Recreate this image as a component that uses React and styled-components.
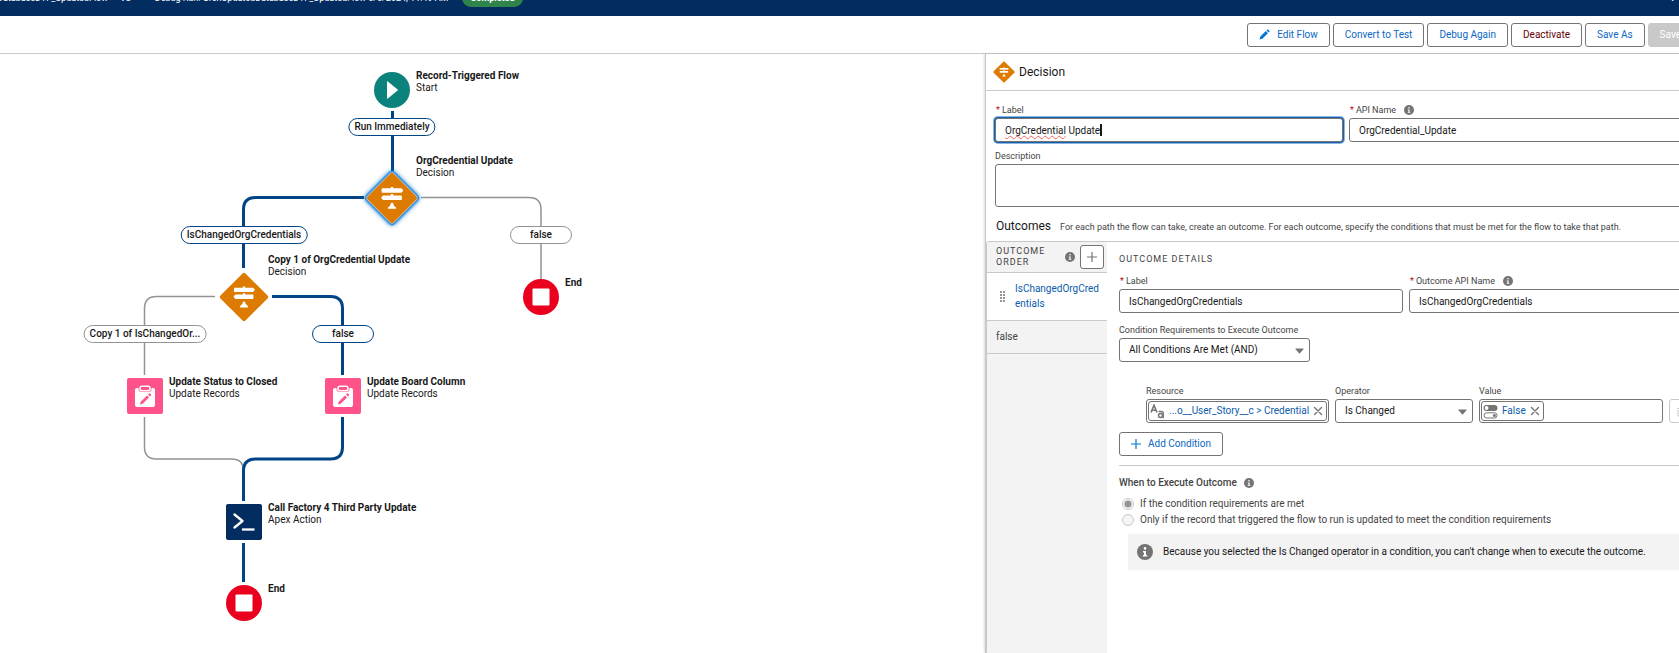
import React from "react";
import styled, { createGlobalStyle, css } from "styled-components";

const GlobalStyle = createGlobalStyle`
  *, *::before, *::after { box-sizing: border-box; }
  html, body { margin: 0; height: 100%; background: #fff; overflow: hidden; }
  #root { height: 100%; }
  body, button, input, textarea, select {
    font-family: Roboto, "Open Sans", sans-serif;
    font-size: 10px;
    line-height: 12px;
    color: #181818;
  }
  button { cursor: pointer; }
`;

const Builder = styled.div`
  display: flex;
  flex-direction: column;
  width: calc(100% + 28px);
  min-height: 100vh;
`;

/* ---------- header and toolbar ---------- */

const Header = styled.header`
  display: flex;
  align-items: center;
  height: 36px;
  margin-top: -20px;
  padding-right: 32px;
  background: #032d60;
  color: #fff;
  font-size: 9px;
  white-space: nowrap;
`;

const FlowName = styled.span`
  display: flex;
  justify-content: flex-end;
  width: 108px;
`;

const Version = styled.span`
  margin-left: 12px;
`;

const RunName = styled.span`
  margin-left: 24px;
`;

const Badge = styled.span`
  margin-left: 14px;
  padding: 3px 8px;
  border-radius: 12px;
  background: #2e844a;
  font-weight: 700;
`;

const HeaderHelp = styled.span`
  margin-left: auto;
  font-weight: 700;
`;

const Toolbar = styled.div`
  display: flex;
  align-items: center;
  justify-content: flex-end;
  gap: 3px;
  height: 38px;
  padding: 0 14px;
  border-bottom: 1px solid #c9c9c9;
`;

const Button = styled.button`
  display: inline-flex;
  align-items: center;
  justify-content: center;
  gap: 7px;
  height: 24px;
  padding: 0 11px;
  border: 1px solid #747474;
  border-radius: 3px;
  background: #fff;
  color: ${(p) => (p.$tone === "danger" ? "#640103" : "#0b67c2")};
  white-space: nowrap;
  ${(p) =>
    p.disabled &&
    css`
      border-color: #c9c9c9;
      background: #c9c9c9;
      color: #fff;
    `}
`;

/* ---------- canvas ---------- */

const Workspace = styled.main`
  display: flex;
  flex: 1;
`;

const Canvas = styled.section`
  position: relative;
  flex: 1;
  min-width: 580px;
  min-height: 599px;
`;

const Connectors = styled.svg`
  position: absolute;
  left: 0;
  top: 0;
`;

const Node = styled.div`
  position: absolute;
  left: ${(p) => p.$x}px;
  top: ${(p) => p.$y}px;
  width: 36px;
  height: 36px;
`;

const NodeIcon = styled.svg`
  display: block;
  width: 36px;
  height: 36px;
  overflow: visible;
`;

const NodeText = styled.div`
  position: absolute;
  left: 42px;
  top: ${(p) => (p.$type === "decision" ? -25 : -2)}px;
  white-space: nowrap;
`;

const NodeTitle = styled.div`
  font-weight: 700;
`;

const PathLabel = styled.div`
  position: absolute;
  left: ${(p) => p.$x}px;
  top: ${(p) => p.$y}px;
  transform: translateX(-50%);
  min-width: 62px;
  height: 18px;
  padding: 2px 5px;
  border: 1px solid ${(p) => (p.$active ? "#014486" : "#939393")};
  border-radius: 9px;
  background: #fff;
  font-weight: 500;
  text-align: center;
  white-space: nowrap;
`;

/* ---------- property panel ---------- */

const Panel = styled.aside`
  display: flex;
  flex-direction: column;
  flex: 0 0 722px;
  min-width: 0;
  border-left: 1px solid #c9c9c9;
  box-shadow: -1px 0 2px rgba(0, 0, 0, 0.14);
  background: #fff;
`;

const PanelHeader = styled.header`
  display: flex;
  align-items: center;
  gap: 4px;
  height: 37px;
  padding: 0 7px;
  border-bottom: 1px solid #c9c9c9;
`;

const PanelTitle = styled.h1`
  margin: 0;
  font-size: 12px;
  font-weight: 400;
`;

const PanelForm = styled.div`
  display: flex;
  flex-direction: column;
  gap: 7px;
  padding: 12px 10px 0 9px;
`;

const FieldRow = styled.div`
  display: flex;
  align-items: flex-end;
  gap: 6px;
`;

const Field = styled.div`
  display: flex;
  flex-direction: column;
  flex: ${(p) => (p.$width ? `0 0 ${p.$width}px` : "1 1 0")};
  min-width: 0;
`;

const LabelLine = styled.div`
  display: flex;
  align-items: center;
  gap: 8px;
  height: 13px;
  margin-bottom: 2px;
  color: #444;
  font-size: 9px;
  white-space: nowrap;
`;

const Required = styled.abbr`
  margin-right: 2px;
  padding-left: 1px;
  color: #ba0517;
  text-decoration: none;
`;

const control = css`
  width: 100%;
  height: 24px;
  padding: 0 9px;
  border: 1px solid #747474;
  border-radius: 3px;
  background: #fff;
  outline: none;
`;

const InputWrap = styled.div`
  position: relative;
  display: flex;
`;

const TextInput = styled.input`
  ${control}
  ${(p) =>
    p.$focused &&
    css`
      box-shadow: 0 0 0 1px #1b5faa, 0 0 0 2px #8bb7e4;
    `}
`;

const SpellMark = styled.span`
  position: absolute;
  left: 10px;
  top: 6px;
  color: transparent;
  pointer-events: none;
  white-space: pre;
  border-right: 2px solid #181818;
`;

const Misspelt = styled.span`
  text-decoration: underline wavy #f0605a 1px;
  text-underline-offset: 2px;
  text-decoration-skip-ink: none;
`;

const TextArea = styled.textarea`
  ${control}
  height: 43px;
  resize: none;
`;

const Select = styled.select`
  ${control}
  appearance: none;
`;

const SelectArrow = styled.svg`
  position: absolute;
  right: 6px;
  top: 10px;
  pointer-events: none;
`;

const OutcomesHeading = styled.div`
  display: flex;
  align-items: baseline;
  gap: 9px;
  padding: 11px 10px 7px;
  color: #444;
  font-size: 9px;
  white-space: nowrap;
`;

const OutcomesTitle = styled.h2`
  margin: 0;
  font-size: 12px;
  line-height: 16px;
  font-weight: 400;
  color: #181818;
`;

const Outcomes = styled.div`
  display: flex;
  flex: 1;
  border-top: 1px solid #c9c9c9;
  border-left: 1px solid #c9c9c9;
  border-top-left-radius: 3px;
`;

const OutcomeList = styled.nav`
  flex: 0 0 120px;
  background: #f3f3f3;
`;

const OutcomeListHeader = styled.div`
  display: flex;
  align-items: center;
  height: 31px;
  padding: 0 3px 0 9px;
  border-bottom: 1px solid #c9c9c9;
`;

const SectionTitle = styled.h3`
  flex: 1;
  margin: 0;
  font-size: 9px;
  line-height: 11px;
  font-weight: 400;
  letter-spacing: 1px;
  text-transform: uppercase;
  color: #444;
`;

const IconButton = styled.button`
  display: flex;
  align-items: center;
  justify-content: center;
  flex: none;
  width: 24px;
  height: 24px;
  margin-left: ${(p) => (p.disabled ? 0 : 5)}px;
  padding: 0;
  border: 1px solid ${(p) => (p.disabled ? "#c9c9c9" : "#747474")};
  border-radius: 3px;
  background: #fff;
`;

const OutcomeItem = styled.a`
  display: flex;
  align-items: center;
  gap: 8px;
  min-height: 33px;
  padding: 8px 6px 9px 9px;
  border-bottom: 1px solid #c9c9c9;
  background: ${(p) => (p.$selected ? "#fff" : "#f3f3f3")};
  color: ${(p) => (p.$selected ? "#0b5cab" : "#444")};
  line-height: 15px;
  text-decoration: none;
  overflow-wrap: anywhere;
`;

const OutcomeDetails = styled.div`
  flex: 1;
  min-width: 0;
  padding: 12px 14px 0 12px;
`;

const DetailFields = styled.div`
  display: flex;
  flex-direction: column;
  gap: 10px;
  margin-top: 9px;
`;

const ConditionRow = styled.div`
  display: flex;
  align-items: flex-end;
  gap: 6px;
  margin: 22px -14px 9px 27px;
`;

const PillBox = styled.div`
  display: flex;
  align-items: center;
  height: 24px;
  padding: 0 1px;
  border: 1px solid #747474;
  border-radius: 3px;
`;

const Pill = styled.span`
  display: flex;
  align-items: center;
  gap: 4px;
  flex: ${(p) => (p.$fill ? "1" : "0 0 auto")};
  min-width: 0;
  height: 20px;
  padding: 0 3px 0 1px;
  border: 1px solid #747474;
  border-radius: 3px;
  white-space: nowrap;
`;

const PillText = styled.a`
  flex: 1;
  color: #0b5cab;
  text-align: right;
  text-decoration: none;
`;

const PillRemove = styled.button`
  display: flex;
  padding: 0;
  border: 0;
  background: none;
`;

const ExecuteSection = styled.fieldset`
  margin: 9px 0 0;
  padding: 10px 0 0;
  border: 0;
  border-top: 1px solid #c9c9c9;
`;

const ExecuteTitle = styled.div`
  display: flex;
  align-items: center;
  gap: 7px;
  height: 14px;
  margin-bottom: 6px;
  font-weight: 500;
  color: #444;
`;

const RadioLabel = styled.label`
  display: flex;
  align-items: center;
  gap: 6px;
  height: 16px;
  padding-left: 3px;
  color: #444;
`;

const Radio = styled.input`
  appearance: none;
  width: 12px;
  height: 12px;
  margin: 0;
  border: 1px solid #c9c9c9;
  border-radius: 50%;
  background: #f3f3f3;
  &:checked {
    background: radial-gradient(circle, #939393 0 3px, #f3f3f3 4px);
  }
`;

const Notice = styled.div`
  display: flex;
  align-items: center;
  gap: 10px;
  height: 36px;
  margin: 6px -14px 0 9px;
  padding: 0 9px;
  background: #f3f3f3;
`;

/* ---------- icons ---------- */

const Icon = styled.svg`
  flex: none;
`;

const InfoIcon = ({ size = 10 }) => (
  <Icon width={size} height={size} viewBox="0 0 16 16" aria-hidden="true">
    <circle cx="8" cy="8" r="8" fill="#747474" />
    <circle cx="8" cy="4.4" r="1.3" fill="#fff" />
    <path d="M6 7h3v4h1.2v1.4H5.9V11H7V8.4H6z" fill="#fff" />
  </Icon>
);

const PlusIcon = ({ color = "#747474", size = 10 }) => (
  <Icon width={size} height={size} viewBox="0 0 10 10" aria-hidden="true">
    <path d="M5 .5v9M.5 5h9" stroke={color} strokeWidth="1.2" fill="none" strokeLinecap="round" />
  </Icon>
);

const CloseIcon = () => (
  <Icon width="10" height="10" viewBox="0 0 10 10" aria-hidden="true">
    <path d="M1.5 1.5l7 7M8.500 1.5l-7 7" stroke="#747474" strokeWidth="1.4" strokeLinecap="round" />
  </Icon>
);

const PencilIcon = () => (
  <Icon width="11" height="11" viewBox="0 0 11 11" aria-hidden="true">
    <path d="M.6 10.400l.6-2.700 5.600-5.600 2.100 2.100-5.600 5.600zM7.500 1.400l.8-.8q.4-.3.8 0l1.300 1.300q.3.4 0 .8l-.8.8z" fill="#0176d3" />
  </Icon>
);

const TextTypeIcon = () => (
  <Icon width="15" height="15" viewBox="0 0 15 15" fill="none" stroke="#747474" aria-hidden="true">
    <path d="M1 8.500 4 1.200l3 7.300M2 6.200h4" strokeWidth="1.600" />
    <circle cx="10.500" cy="11.500" r="2" strokeWidth="1.500" />
    <path d="M8.500 7.500h2.700q2 0 2 1.800v5" strokeWidth="1.500" />
  </Icon>
);

const BooleanIcon = () => (
  <Icon width="15" height="15" viewBox="0 0 15 15" aria-hidden="true">
    <rect x=".5" y="1" width="14" height="6" rx="3" fill="#747474" />
    <circle cx="3.600" cy="4" r="1.900" fill="#fff" />
    <rect x="1" y="8.800" width="13" height="5.200" rx="2.600" fill="#fff" stroke="#747474" />
    <circle cx="11.400" cy="11.400" r="1.500" fill="#747474" />
  </Icon>
);

const DragIcon = () => (
  <Icon width="11" height="12" viewBox="0 0 11 12" fill="#747474" aria-hidden="true">
    {[1, 4, 7, 10].map((y) => (
      <React.Fragment key={y}>
        <rect x="4" y={y} width="2" height="2" rx="1" />
        <rect x="7" y={y} width="2" height="2" rx="1" />
      </React.Fragment>
    ))}
  </Icon>
);

const TrashIcon = () => (
  <Icon width="11" height="11" viewBox="0 0 11 11" fill="none" stroke="#c9c9c9" aria-hidden="true">
    <path d="M1 2.500h9M4 2V1h3v1M2 4v6h7V4M4.500 5v3.500M6.500 5v3.500" />
  </Icon>
);

const signpost =
  "M-1.200-11h2.400v1.300h8.200l2 2.200-2 2.200H-9.800q-.6 0-.6-.6v-3.200q0-.6.6-.6h8.600zM-9-2.500h7.800V-4h2.400v1.500h8q.6 0 .6.6V1.400q0 .6-.6.6H-9l-2-2.200zM-1.200 5.500q0-.7 1.200-.7t1.200.7q.3 2.700 2.800 3.900.3 1.300 0 1.400h-8q-.3 0 0-1.400 2.500-1.200 2.800-3.900z";

const DecisionGlyph = ({ half = 24 }) => (
  <>
    <rect x={-half * 0.707} y={-half * 0.707} width={half * 1.414} height={half * 1.414} rx={half / 12} transform="rotate(45)" fill="#dd7a01" />
    <path d={signpost} fill="#fff" transform={`scale(${half / 26})`} />
  </>
);

const PanelDecisionIcon = () => (
  <Icon width="22" height="22" viewBox="-25 -25 50 50" aria-hidden="true">
    <DecisionGlyph half={25} />
  </Icon>
);

const glyphs = {
  start: (
    <>
      <circle r="18" fill="#0b827c" />
      <path d="M-5-8.200q0-1 .8-.4l9.800 8q.6.600 0 1.200l-9.800 8q-.8.600-.8-.4z" fill="#fff" />
    </>
  ),
  decision: <DecisionGlyph half={25} />,
  selected: (
    <>
      <rect x="-19.500" y="-19.500" width="39" height="39" rx="3" transform="rotate(45)" fill="#fff" stroke="#1b7fdb" strokeWidth="1.500" style={{ filter: "drop-shadow(0 0 2px #0176d3)" }} />
      <DecisionGlyph half={26} />
    </>
  ),
  update: (
    <>
      <rect x="-18" y="-18" width="36" height="36" rx="2" fill="#ff538a" />
      <rect x="-10" y="-8" width="20" height="19" rx="2" fill="#fff" />
      <rect x="-6.500" y="-11" width="13" height="7" rx="3" fill="#ff538a" />
      <rect x="-5" y="-9.800" width="10" height="4.600" rx="2" fill="#ff538a" stroke="#fff" strokeWidth="1.600" />
      <path d="M-5 8.500l.7-2.700 6.300-6.300 2 2-6.300 6.300zM3-1.500l1-1q.5-.5 1 0l1 1q.5.500 0 1l-1 1z" fill="#ff538a" />
    </>
  ),
  apex: (
    <>
      <rect x="-18" y="-18" width="36" height="36" rx="2" fill="#032d60" />
      <path d="M-9.500-7.500l8 6.500-8 6.500" fill="none" stroke="#fff" strokeWidth="2.300" strokeLinecap="round" strokeLinejoin="round" />
      <path d="M-2 7.500h12.500" stroke="#fff" strokeWidth="2.300" />
    </>
  ),
  end: (
    <>
      <circle r="18" fill="#ea001e" />
      <rect x="-8.500" y="-8.500" width="17" height="17" rx="1" fill="#fff" />
    </>
  ),
};

/* ---------- data ---------- */

const nodes = [
  { x: 374, y: 18, type: "start", title: "Record-Triggered Flow", sub: "Start" },
  { x: 374, y: 126, type: "decision", selected: true, title: "OrgCredential Update", sub: "Decision" },
  { x: 226, y: 225, type: "decision", title: "Copy 1 of OrgCredential Update", sub: "Decision" },
  { x: 523, y: 225, type: "end", title: "End" },
  { x: 127, y: 324, type: "update", title: "Update Status to Closed", sub: "Update Records" },
  { x: 325, y: 324, type: "update", title: "Update Board Column", sub: "Update Records" },
  { x: 226, y: 450, type: "apex", title: "Call Factory 4 Third Party Update", sub: "Apex Action" },
  { x: 226, y: 531, type: "end", title: "End" },
];

const pathLabels = [
  { x: 392, y: 64, text: "Run Immediately", active: true },
  { x: 244, y: 172, text: "IsChangedOrgCredentials", active: true },
  { x: 541, y: 172, text: "false" },
  { x: 145, y: 271, text: "Copy 1 of IsChangedOr..." },
  { x: 343, y: 271, text: "false", active: true },
];

const idlePaths =
  "M421 143.500H529q12 0 12 12V225M215 242.500H156.500q-12 0-12 12V321M144.500 363v30q0 12 12 12H231.500q12 0 12 12";
const activePaths =
  "M392.500 57V117M364 143.500H255.500q-12 0-12 12V214M272 242.500h58.500q12 0 12 12V321M342.500 363v30q0 12-12 12H255.500q-12 0-12 12V447M243.500 489v39";

const Label = ({ htmlFor, required, info, children }) => (
  <LabelLine>
    <label htmlFor={htmlFor}>
      {required && <Required title="required">*</Required>}
      {children}
    </label>
    {info && <InfoIcon />}
  </LabelLine>
);

const Dropdown = ({ id, value }) => (
  <InputWrap>
    <Select id={id} defaultValue={value}>
      <option>{value}</option>
    </Select>
    <SelectArrow width="9" height="6" viewBox="0 0 9 6" aria-hidden="true">
      <path d="M.8.500h7.400q.6.200.2.700L5 5.200q-.5.400-1 0L.6 1.200Q.2.700.8.500z" fill="#747474" />
    </SelectArrow>
  </InputWrap>
);

export default function App() {
  return (
    <Builder>
      <GlobalStyle />
      <Header>
        <FlowName>OrchUpdatedDatabaseDTF_UpdatedFlow</FlowName>
        <Version>V8</Version>
        <RunName>Debug Run: OrchUpdatedDatabaseDTF_UpdatedFlow 6/6/2024, 11:49 AM</RunName>
        <Badge>Completed</Badge>
        <HeaderHelp>?</HeaderHelp>
      </Header>
      <Toolbar>
        <Button type="button"><PencilIcon />Edit Flow</Button>
        <Button type="button">Convert to Test</Button>
        <Button type="button">Debug Again</Button>
        <Button type="button" $tone="danger">Deactivate</Button>
        <Button type="button">Save As</Button>
        <Button type="button" disabled>Save</Button>
      </Toolbar>

      <Workspace>
        <Canvas aria-label="Flow canvas">
          <Connectors width="600" height="560" fill="none" aria-hidden="true">
            <path d={idlePaths} stroke="#939393" strokeWidth="1.500" />
            <path d={activePaths} stroke="#014486" strokeWidth="3" />
          </Connectors>
          {pathLabels.map((p) => (
            <PathLabel key={`${p.x}-${p.y}`} $x={p.x} $y={p.y} $active={p.active}>{p.text}</PathLabel>
          ))}
          {nodes.map((n) => (
            <Node key={`${n.x}-${n.y}`} $x={n.x} $y={n.y}>
              <NodeIcon viewBox="-18 -18 36 36" aria-hidden="true">
                {glyphs[n.selected ? "selected" : n.type]}
              </NodeIcon>
              <NodeText $type={n.type}>
                <NodeTitle>{n.title}</NodeTitle>
                {n.sub}
              </NodeText>
            </Node>
          ))}
        </Canvas>

        <Panel>
          <PanelHeader>
            <PanelDecisionIcon />
            <PanelTitle>Decision</PanelTitle>
          </PanelHeader>
          <PanelForm>
            <FieldRow>
              <Field>
                <Label htmlFor="label" required>Label</Label>
                <InputWrap>
                  <TextInput id="label" $focused defaultValue="OrgCredential Update" />
                  <SpellMark aria-hidden="true"><Misspelt>OrgCredential</Misspelt> Update</SpellMark>
                </InputWrap>
              </Field>
              <Field>
                <Label htmlFor="api" required info>API Name</Label>
                <TextInput id="api" defaultValue="OrgCredential_Update" />
              </Field>
            </FieldRow>
            <Field>
              <Label htmlFor="description">Description</Label>
              <TextArea id="description" />
            </Field>
          </PanelForm>
          <OutcomesHeading>
            <OutcomesTitle>Outcomes</OutcomesTitle>
            <span>For each path the flow can take, create an outcome. For each outcome, specify the conditions that must be met for the flow to take that path.</span>
          </OutcomesHeading>
          <Outcomes>
            <OutcomeList>
              <OutcomeListHeader>
                <SectionTitle>Outcome Order</SectionTitle>
                <InfoIcon />
                <IconButton type="button" aria-label="Add outcome"><PlusIcon /></IconButton>
              </OutcomeListHeader>
              <OutcomeItem href="#outcome" $selected>
                <DragIcon />
                <span>IsChangedOrgCredentials</span>
              </OutcomeItem>
              <OutcomeItem href="#default">false</OutcomeItem>
            </OutcomeList>
            <OutcomeDetails>
              <SectionTitle>Outcome Details</SectionTitle>
              <DetailFields>
                <FieldRow>
                  <Field>
                    <Label htmlFor="outcome-label" required>Label</Label>
                    <TextInput id="outcome-label" defaultValue="IsChangedOrgCredentials" />
                  </Field>
                  <Field>
                    <Label htmlFor="outcome-api" required info>Outcome API Name</Label>
                    <TextInput id="outcome-api" defaultValue="IsChangedOrgCredentials" />
                  </Field>
                </FieldRow>
                <FieldRow>
                  <Field $width={191}>
                    <Label htmlFor="logic">Condition Requirements to Execute Outcome</Label>
                    <Dropdown id="logic" value="All Conditions Are Met (AND)" />
                  </Field>
                </FieldRow>
              </DetailFields>
              <ConditionRow>
                <Field $width={183}>
                  <LabelLine>Resource</LabelLine>
                  <PillBox>
                    <Pill $fill>
                      <TextTypeIcon />
                      <PillText href="#resource">...o__User_Story__c &gt; Credential</PillText>
                      <PillRemove type="button" aria-label="Remove resource"><CloseIcon /></PillRemove>
                    </Pill>
                  </PillBox>
                </Field>
                <Field $width={138}>
                  <Label htmlFor="operator">Operator</Label>
                  <Dropdown id="operator" value="Is Changed" />
                </Field>
                <Field $width={184}>
                  <LabelLine>Value</LabelLine>
                  <PillBox>
                    <Pill>
                      <BooleanIcon />
                      <PillText href="#value">False</PillText>
                      <PillRemove type="button" aria-label="Remove value"><CloseIcon /></PillRemove>
                    </Pill>
                  </PillBox>
                </Field>
                <IconButton type="button" disabled aria-label="Delete condition"><TrashIcon /></IconButton>
              </ConditionRow>
              <Button type="button"><PlusIcon color="#0176d3" />Add Condition</Button>
              <ExecuteSection disabled>
                <ExecuteTitle>When to Execute Outcome <InfoIcon /></ExecuteTitle>
                <RadioLabel>
                  <Radio type="radio" name="when" defaultChecked />
                  If the condition requirements are met
                </RadioLabel>
                <RadioLabel>
                  <Radio type="radio" name="when" />
                  Only if the record that triggered the flow to run is updated to meet the condition requirements
                </RadioLabel>
                <Notice>
                  <InfoIcon size={16} />
                  <span>Because you selected the Is Changed operator in a condition, you can't change when to execute the outcome.</span>
                </Notice>
              </ExecuteSection>
            </OutcomeDetails>
          </Outcomes>
        </Panel>
      </Workspace>
    </Builder>
  );
}
